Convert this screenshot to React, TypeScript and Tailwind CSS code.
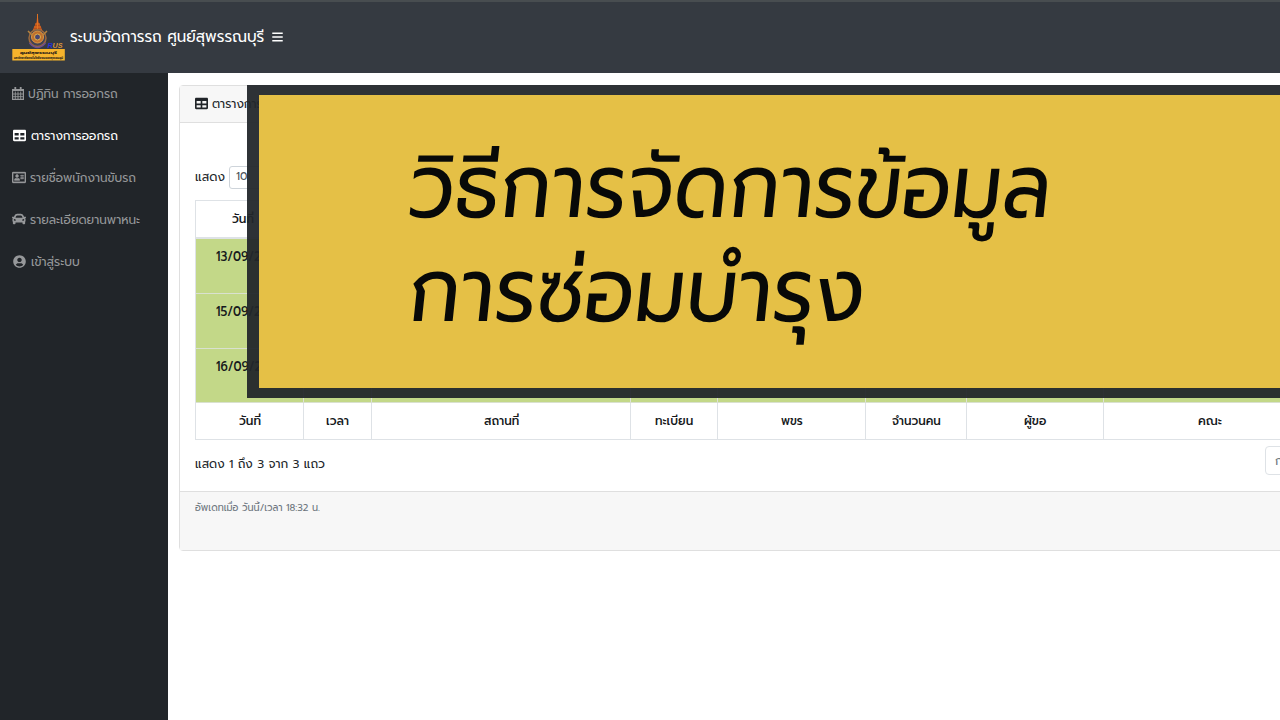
import { useLayoutEffect, useRef, useState } from "react";
import type { ReactNode } from "react";
import { FaBars, FaCar, FaRegAddressCard, FaTable, FaUserCircle } from "react-icons/fa";

// Stretches one line of text to the width of its box.
function Fit({ className, children }: { className: string; children: ReactNode }) {
  const box = useRef<HTMLSpanElement>(null);
  const text = useRef<HTMLSpanElement>(null);
  const [scale, setScale] = useState(1);
  useLayoutEffect(() => {
    if (box.current && text.current) setScale(box.current.clientWidth / text.current.offsetWidth);
  }, []);
  return (
    <span ref={box} className={`block shrink-0 text-left whitespace-nowrap ${className}`}>
      <span ref={text} className="inline-block origin-left" style={{ transform: `scaleX(${scale})` }}>
        {children}
      </span>
    </span>
  );
}

function CalendarGrid() {
  return (
    <svg className="h-[13px] w-[12px]" viewBox="0 0 12 13" fill="none" stroke="currentColor">
      <path d="M0.600 2.500H11.400V12.400H0.600Z" strokeWidth="1.200" />
      <path d="M0.600 3H11.400" strokeWidth="2" />
      <path d="M3.300 0V3M8.700 0V3" strokeWidth="1.800" />
      <path d="M3.300 4.500V12.400M6 4.500V12.400M8.700 4.500V12.400M0.600 7H11.400M0.600 9.700H11.400" strokeWidth="0.900" />
    </svg>
  );
}

function Logo() {
  return (
    <svg className="h-[52px] w-[54px] shrink-0" viewBox="0 0 54 52">
      <path d="M25.500 2L26.500 11L29 16L31 21L25.500 25L20 21L22 16L24.500 11Z" fill="#b9501f" />
      <path d="M25.500 3V22M23 13H28M22 16H29M21 19H30" stroke="#e87520" strokeWidth="0.900" />
      <circle cx="25.500" cy="27" r="8.500" fill="#414155" stroke="#9c6a3d" strokeWidth="1.500" />
      <circle cx="25.500" cy="26" r="6" fill="#c06f2c" stroke="#d99a45" />
      <circle cx="25.500" cy="26" r="3" fill="#4a4670" stroke="#e2b34d" />
      <path d="M16 20L20 24M35 20L31 24" stroke="#b9843e" strokeWidth="1.500" />
      <path d="M17.500 32Q25.500 41 33.500 32" stroke="#6c4d8e" strokeWidth="1.500" fill="none" />
      <text x="35.500" y="37" fontSize="7.800" fontWeight="700" fontStyle="italic" fontFamily="Liberation Sans, sans-serif" fill="#2630d8">R</text>
      <text x="40.500" y="37" fontSize="7.800" fontWeight="700" fontStyle="italic" textLength="10" lengthAdjust="spacingAndGlyphs" fontFamily="Liberation Sans, sans-serif" fill="#dd963c">US</text>
      <rect x="0.300" y="38" width="52.500" height="11.500" fill="#f6b32c" />
      <text x="8" y="43" fontSize="4.200" fontWeight="700" textLength="37" lengthAdjust="spacingAndGlyphs" fontFamily="Prompt, Noto Sans Thai, sans-serif" fill="#2c2118">ศูนย์สุพรรณบุรี</text>
      <text x="2" y="48" fontSize="4.200" fontWeight="700" textLength="49" lengthAdjust="spacingAndGlyphs" fontFamily="Prompt, Noto Sans Thai, sans-serif" fill="#2c2118">มหาวิทยาลัยเทคโนโลยีราชมงคลสุวรรณภูมิ</text>
    </svg>
  );
}

const links = [
  { icon: <CalendarGrid />, label: "ปฏิทิน การออกรถ", width: "w-[90px]", pad: "pl-[12px] gap-[4px]", color: "text-[#96989a]" },
  { icon: <FaTable />, label: "ตารางการออกรถ", width: "w-[87px]", pad: "pl-[13px] gap-[5px]", color: "text-white" },
  { icon: <FaRegAddressCard className="h-[13px] w-[14px] stroke-current [stroke-width:16]" />, label: "รายชื่อพนักงานขับรถ", width: "w-[106px]", pad: "pl-[12px] gap-[4px]", color: "text-[#96989a]" },
  { icon: <FaCar className="size-[14px]" />, label: "รายละเอียดยานพาหนะ", width: "w-[110px]", pad: "pl-[12px] gap-[4px]", color: "text-[#96989a]" },
  { icon: <FaUserCircle />, label: "เข้าสู่ระบบ", width: "w-[49px]", pad: "pl-[13px] gap-[5px]", color: "text-[#96989a]" },
];

const columns = [
  { label: "วันที่", width: "w-[22px]" },
  { label: "เวลา", width: "w-[23px]" },
  { label: "สถานที่", width: "w-[35px]" },
  { label: "ทะเบียน", width: "w-[38px]" },
  { label: "พขร", width: "w-[22px]" },
  { label: "จำนวนคน", width: "w-[49px]" },
  { label: "ผู้ขอ", width: "w-[22px]" },
  { label: "คณะ", width: "w-[24px]" },
];

const grid = "grid w-[1120px] grid-cols-[108px_68px_259px_87px_148px_101px_137px_212px]";

function HeadingRow({ height, cell }: { height: string; cell: string }) {
  return (
    <div className={`${grid} ${height} text-[12.5px] font-medium text-[#16191c]`}>
      {columns.map((c) => (
        <div key={c.label} className={`flex items-center justify-center border-r border-[#dee2e6] ${cell}`}>
          <Fit className={c.width}>{c.label}</Fit>
        </div>
      ))}
    </div>
  );
}

function DateRow({ date, height }: { date: string; height: string }) {
  return (
    <div className={`${grid} ${height} border-b border-[#d9e1cf] bg-[#c3d888]`}>
      {columns.map((c, i) => (
        <div key={c.label} className="flex justify-center border-r border-[#dee2d8] pt-[8px] text-[13px] leading-[20px] font-medium text-[#16191c]">
          {i === 0 && <Fit className="w-[68px]">{date}</Fit>}
        </div>
      ))}
    </div>
  );
}

export default function App() {
  return (
    <div className="relative flex h-[720px] w-[1280px] flex-col overflow-hidden bg-white font-['Prompt','Noto_Sans_Thai','Noto_Sans',sans-serif]">
      <header className="flex h-[73px] shrink-0 items-center border-t-2 border-[#484d50] bg-[#353a41] pb-[1px] pl-[11.5px] text-white">
        <Logo />
        <Fit className="mb-[1px] ml-[4px] w-[194px] text-[16px] leading-6">ระบบจัดการรถ ศูนย์สุพรรณบุรี</Fit>
        <FaBars className="ml-[8px] h-[12px] w-[11px]" />
      </header>
      <div className="flex min-h-0 flex-1">
        <nav className="w-[168px] shrink-0 bg-[#212529]">
          {links.map((l) => (
            <div key={l.label} className={`flex h-[42px] items-center ${l.pad} ${l.color} pb-[1px] text-[13px]`}>
              <span className="pb-[1px] text-[13px]">{l.icon}</span>
              <Fit className={l.width}>{l.label}</Fit>
            </div>
          ))}
        </nav>
        <main className="min-w-0 flex-1 overflow-hidden pt-[12px] pl-[11px]">
          <section className="flex h-[466px] w-[1180px] flex-col rounded-[4px] border border-[#dfdfdf] bg-white text-[#212529]">
            <div className="flex h-[37px] shrink-0 items-center gap-[4px] border-b border-[#dfdfdf] bg-[#f7f7f7] pb-[1px] pl-[15px] text-[13px]">
              <FaTable className="size-[13px]" />
              <Fit className="w-[87px]">ตารางการออกรถ</Fit>
            </div>
            <div className="flex flex-1 flex-col pl-[15px]">
              <div className="mt-[42px] flex h-[24px] items-center gap-[4px] text-[12.5px]">
                <Fit className="w-[30px]">แสดง</Fit>
                <div className="flex h-[23px] w-[54px] items-center rounded-[3px] border border-[#ced4da] pl-[6px] text-[11px] text-[#495057]">10</div>
              </div>
              <div className="mt-[11px] w-[1121px] border border-[#dee2e6]">
                <HeadingRow height="h-[38px] border-b-2 border-[#dee2e6]" cell="pr-[14px]" />
                <DateRow date="13/09/2020" height="h-[55px]" />
                <DateRow date="15/09/2020" height="h-[55px]" />
                <DateRow date="16/09/2020" height="h-[54px]" />
                <HeadingRow height="h-[36px]" cell="" />
              </div>
              <div className="mt-[6px] flex h-[29px] items-start text-[12.5px] leading-5">
                <Fit className="mt-[8px] w-[130px]">แสดง 1 ถึง 3 จาก 3 แถว</Fit>
                <div className="ml-[940px] flex h-[29px] w-[70px] items-center rounded-[4px] border border-[#dee2e6] pl-[9px] text-[12px] text-[#6c757d]">ก่อนหน้า</div>
              </div>
            </div>
            <div className="h-[59px] shrink-0 border-t border-[#dfdfdf] bg-[#f7f7f7] pt-[7px] pl-[15px] text-[10px] leading-[18px] text-[#6c757d]">
              <Fit className="w-[125px]">อัพเดทเมื่อ วันนี้/เวลา 18:32 น.</Fit>
            </div>
          </section>
        </main>
      </div>
      <div className="absolute top-[85px] left-[247px] flex h-[313px] w-[1033px] border-y-[10px] border-l-[12px] border-[#22262af1]">
        <div className="w-full bg-[#e5c046] pt-[40px] pl-[150px] text-[#080908]">
          <Fit className="h-[104px] w-[643px] -skew-x-6 text-[90px] leading-[104px]">วิธีการจัดการข้อมูล</Fit>
          <Fit className="h-[104px] w-[456px] -skew-x-6 text-[90px] leading-[104px]">การซ่อมบำรุง</Fit>
        </div>
      </div>
    </div>
  );
}
